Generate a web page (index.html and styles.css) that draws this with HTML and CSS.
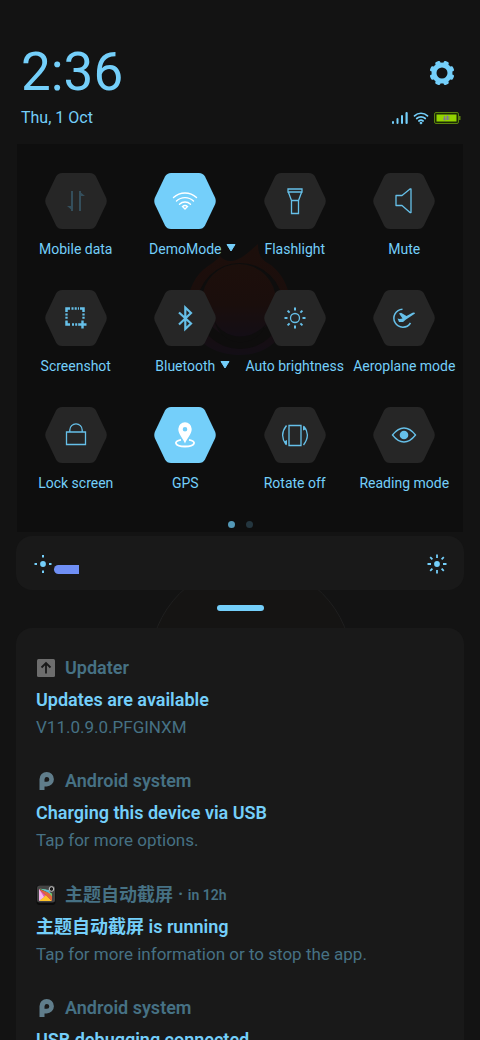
FILE: index.html
```html
<!DOCTYPE html>
<html lang="en">
<head>
<meta charset="utf-8">
<meta name="viewport" content="width=device-width, initial-scale=1">
<title>Notification shade</title>
<link rel="stylesheet" href="styles.css">
</head>
<body>
<main class="shade">
  <header class="header">
    <div class="header-row">
      <time class="clock">2:36</time>
      <button class="settings" aria-label="Settings">
        <svg viewBox="0 0 26 26" width="26" height="26"><circle cx="13" cy="13" r="8" fill="none" stroke="currentColor" stroke-width="5"/><g fill="currentColor"><rect id="tooth" x="10.300" y=".6" width="5.400" height="5" rx="1.500" transform="rotate(22.500 13 13)"/><use href="#tooth" transform="rotate(45 13 13)"/><use href="#tooth" transform="rotate(90 13 13)"/><use href="#tooth" transform="rotate(135 13 13)"/><use href="#tooth" transform="rotate(180 13 13)"/><use href="#tooth" transform="rotate(225 13 13)"/><use href="#tooth" transform="rotate(270 13 13)"/><use href="#tooth" transform="rotate(315 13 13)"/></g></svg>
      </button>
    </div>
    <div class="header-row">
      <span class="date">Thu, 1 Oct</span>
      <div class="status">
        <svg viewBox="0 0 16 14" width="16" height="14" fill="currentColor"><rect y="10" width="2" height="3" rx="1"/><rect x="4.500" y="7" width="2" height="6" rx="1"/><rect x="9" y="4" width="2" height="9" rx="1"/><rect x="13.500" y="1" width="2.200" height="12" rx="1"/></svg>
        <svg viewBox="0 0 16 14" width="16" height="14" fill="none" stroke="currentColor" stroke-width="1.700" stroke-linecap="round"><path d="M1.500 4.800a9.500 9.500 0 0 1 13 0M3.700 7.500a6.400 6.400 0 0 1 8.600 0M5.900 10a3.300 3.300 0 0 1 4.200 0"/><circle cx="8" cy="12" r=".5"/></svg>
        <svg viewBox="0 0 27 14" width="27" height="14"><rect x=".5" y="1.500" width="24" height="11" rx="1.500" fill="#1d2b05" stroke="#5b840d"/><rect x="2.500" y="3.500" width="20" height="7" fill="#94d500"/><rect x="25" y="5" width="1.500" height="4" fill="#5b840d"/><path d="M10.500 5v4.500M13.500 4.500v4.500M9 8h3.500M12 6h3.500M12.500 8h3" stroke="#80769a" stroke-width="1.200"/></svg>
      </div>
    </div>
  </header>

  <section class="panel" aria-label="Quick settings">
    <svg class="ember" viewBox="0 0 120 130" aria-hidden="true">
      <defs><linearGradient id="glow" x1="0" y1="0" x2="0" y2="1"><stop offset="0" stop-color="#23100b"/><stop offset=".55" stop-color="#200e0c"/><stop offset="1" stop-color="#160e1a"/></linearGradient></defs>
      <path d="M12 96C2 72 10 46 28 34c4-3 8-5 12-10 4 5 10 6 16 4 8-3 14-9 22-16 0 8 2 14 8 18 22 12 30 42 20 64-8 18-24 29-46 29S20 114 12 96z" fill="url(#glow)"/>
      <circle cx="60" cy="74" r="43" fill="#0e0d0d"/>
      <circle cx="59" cy="69" r="37" fill="url(#glow)"/>
      <path d="M34 88c8 18 34 24 52 4-8 24-44 26-52-4z" fill="#0e0d0d"/>
    </svg>
    <div class="tiles">
      <button class="tile off"><span class="hex"><svg class="shape" viewBox="0 0 62 56"><use href="#hex"/></svg><svg class="icon" viewBox="-16 -16 32 32"><path d="M-4-10V10M4 10V-10" stroke-width="2"/><path d="M-3 10l-6-5h5zM3-10l6 5H4z" fill="currentColor" stroke="none"/></svg></span><span class="label">Mobile data</span></button>
      <button class="tile on"><span class="hex"><svg class="shape" viewBox="0 0 62 56"><use href="#hex"/></svg><svg class="icon" viewBox="-16 -16 32 32" stroke-linecap="round"><path d="M-11.500-3.500a17 17 0 0 1 23 0M-8.500 0a12.500 12.500 0 0 1 17 0M-5.500 3.200a8 8 0 0 1 11 0" stroke-width="1.400"/><path d="M0 8l-2.500-2.500q2.500-2 5 0z" stroke-width="1.300"/></svg></span><span class="label">DemoMode<svg class="arrow" viewBox="0 0 10 8"><path d="M1 .5h8L5 7z"/></svg></span></button>
      <button class="tile"><span class="hex"><svg class="shape" viewBox="0 0 62 56"><use href="#hex"/></svg><svg class="icon" viewBox="-16 -16 32 32"><path d="M-7-12H7V-9H-7zM-6.500-8.500L-3.500-.5H3.500L6.500-8.500M-3.500-.5V12.500H3.500V-.5"/></svg></span><span class="label">Flashlight</span></button>
      <button class="tile"><span class="hex"><svg class="shape" viewBox="0 0 62 56"><use href="#hex"/></svg><svg class="icon" viewBox="-16 -16 32 32" stroke-linejoin="round"><path d="M-8-5.500h6L6-12h1V11.500H6L-2 4.500h-6z"/></svg></span><span class="label">Mute</span></button>

      <button class="tile"><span class="hex"><svg class="shape" viewBox="0 0 62 56"><use href="#hex"/></svg><svg class="icon" viewBox="-16 -16 32 32"><path d="M-9.500-6v-3.500H-6M4-9.500h3.500V-6M-9.500 3v3.500H-6" stroke-width="2.500"/><path d="M-4.500-9.500H3M-4 6.500H3" stroke-width="2.300" stroke-dasharray="2 1.200"/><path d="M-9.500-4.500V2.500M7.500-4.500V2" stroke-width="2.300" stroke-dasharray="2 1.200"/><path d="M6.500 2.500v8M2.500 6.500h8" stroke-width="2.400"/></svg></span><span class="label">Screenshot</span></button>
      <button class="tile"><span class="hex"><svg class="shape" viewBox="0 0 62 56"><use href="#hex"/></svg><svg class="icon" viewBox="-16 -16 32 32"><path d="M-6-5.500L6 5.500 .3 11V-10.500L6-5-6 6.500" stroke-width="2.200"/></svg></span><span class="label">Bluetooth<svg class="arrow" viewBox="0 0 10 8"><path d="M1 .5h8L5 7z"/></svg></span></button>
      <button class="tile"><span class="hex"><svg class="shape" viewBox="0 0 62 56"><use href="#hex"/></svg><svg class="icon" viewBox="-16 -16 32 32"><circle r="4.500"/><path d="M0-10.500v3M0 7.500v3M-10.500 0h3M7.500 0h3M-7.400-7.400l2 2M7.400-7.400l-2 2M-7.400 7.400l2-2M7.400 7.400l-2-2" stroke-width="2"/></svg></span><span class="label">Auto brightness</span></button>
      <button class="tile"><span class="hex"><svg class="shape" viewBox="0 0 62 56"><use href="#hex"/></svg><svg class="icon" viewBox="-16 -16 32 32"><path d="M-1.500-8.800A9 9 0 1 0 6.500 5" stroke-width="1.500"/><path d="M-6.500.5l2 .5 3-.5-3.500-5 2-.8L2.500-2l6-3.200q2.500-.8 2.500.8L2 1.500-1 4-5 4z" fill="currentColor" stroke="none"/></svg></span><span class="label">Aeroplane mode</span></button>

      <button class="tile"><span class="hex"><svg class="shape" viewBox="0 0 62 56"><use href="#hex"/></svg><svg class="icon" viewBox="-16 -16 32 32"><path d="M-9.500-3H9.500V9.500H-9.500zM-6.200-3v-2a6.200 6.200 0 0 1 12.400 0v2" stroke-width="1.300"/></svg></span><span class="label">Lock screen</span></button>
      <button class="tile on"><span class="hex"><svg class="shape" viewBox="0 0 62 56"><use href="#hex"/></svg><svg class="icon" viewBox="-16 -16 32 32"><path fill-rule="evenodd" d="M0 8.500C-2 3-6.700-.5-6.700-6a6.700 6.700 0 0 1 13.400 0C6.700-.5 2 3 0 8.500zM0-8a2.300 2.300 0 1 0 0 4.600A2.300 2.300 0 0 0 0-8z" fill="currentColor" stroke="none"/><path d="M-4 4.800C-12 6-10.500 11.500 0 11.500S12 6 4 4.800" stroke-width="1.800"/></svg></span><span class="label">GPS</span></button>
      <button class="tile"><span class="hex"><svg class="shape" viewBox="0 0 62 56"><use href="#hex"/></svg><svg class="icon" viewBox="-16 -16 32 32"><path d="M-6-9.500H6V10.500H-6z"/><path d="M-8.500-9.500Q-16 0-9 9.500M8.500 10Q16 0 9-8.500"/><path d="M-8 5v5.500l-3-4zM8-9.500v5l3.500-1.500z" fill="currentColor" stroke="none"/></svg></span><span class="label">Rotate off</span></button>
      <button class="tile"><span class="hex"><svg class="shape" viewBox="0 0 62 56"><use href="#hex"/></svg><svg class="icon" viewBox="-16 -16 32 32"><path d="M-11.500 0Q-6-7 0-7T11.500 0Q6 7 0 7T-11.500 0z"/><circle r="4.300" fill="currentColor" stroke="none"/></svg></span><span class="label">Reading mode</span></button>
    </div>
    <div class="dots"><span class="dot current"></span><span class="dot"></span></div>
  </section>

  <section class="brightness">
    <svg viewBox="-10 -10 20 20" width="20" height="20" stroke="currentColor" stroke-width="2"><circle r="2.900" fill="currentColor" stroke="none"/><path d="M0-9v2.500M0 6.500V9M-8.500 0H-6M6 0h2.500"/></svg>
    <input class="slider" type="range" min="0" max="100" value="7" aria-label="Brightness">
    <svg viewBox="-10 -10 20 20" width="20" height="20" stroke="currentColor" stroke-width="1.800"><circle r="2.900" fill="currentColor" stroke="none"/><path d="M0-9.500v3.500M0 6v3.500M-9.500 0H-6M6 0h3.500M-6.800-6.800l2.200 2.200M6.800-6.800L4.600-4.600M-6.800 6.800l2.200-2.200M6.800 6.800L4.600 4.600"/></svg>
  </section>

  <div class="grip">
    <svg class="arc" viewBox="0 0 204 38" aria-hidden="true"><circle cx="102" cy="75" r="101"/></svg>
    <span class="handle"></span>
  </div>

  <section class="notifications" aria-label="Notifications">
    <article class="note">
      <div class="app"><svg viewBox="0 0 20 20" width="20" height="20"><rect x="1" y="1" width="18" height="18" rx="1.500" fill="#6d6d6d"/><path d="M10 15.500V5.500M5.500 9.500L10 5l4.500 4.500" fill="none" stroke="#191919" stroke-width="1.800"/></svg><span>Updater</span></div>
      <h2 class="title">Updates are available</h2>
      <p class="text">V11.0.9.0.PFGINXM</p>
    </article>
    <article class="note">
      <div class="app"><svg viewBox="0 0 20 20" width="20" height="20"><use href="#pie"/></svg><span>Android system</span></div>
      <h2 class="title">Charging this device via USB</h2>
      <p class="text">Tap for more options.</p>
    </article>
    <article class="note">
      <div class="app"><svg viewBox="0 0 20 20" width="20" height="20"><rect x=".5" width="19" height="20" rx="3" fill="#0c0c0c"/><rect x="1" y=".5" width="18" height="17" rx="2.500" fill="#444"/><path d="M3 4v12l7-5.500z" fill="#e85ab0"/><path d="M3 16h13l-6-6z" fill="#ffc52b"/><path d="M3 4l7 6.500 6 5.500V9z" fill="#e4663d"/><path d="M3 3.500l7 1 6 7v-3z" fill="#72cb68"/><path d="M3 4l5 8-5 4z" fill="#f5b9ee"/><path d="M5 4l8 1 2 4z" fill="#60bed4"/><circle cx="15.500" cy="4" r="2.300" fill="#191919" stroke="#ccc"/></svg><span>主题自动截屏</span><span class="when">·&nbsp;<b>in 12h</b></span></div>
      <h2 class="title">主题自动截屏 is running</h2>
      <p class="text">Tap for more information or to stop the app.</p>
    </article>
    <article class="note">
      <div class="app"><svg viewBox="0 0 20 20" width="20" height="20"><use href="#pie"/></svg><span>Android system</span></div>
      <h2 class="title">USB debugging connected</h2>
    </article>
  </section>
</main>
<svg class="defs" aria-hidden="true"><defs>
  <path id="hex" d="M17 0H45Q49 0 51 3.500L61 24.500Q62.500 28 61 31.500L51 52.500Q49 56 45 56H17Q13 56 11 52.500L1 31.500Q-.5 28 1 24.500L11 3.500Q13 0 17 0z"/>
  <path id="pie" fill="#607d8b" fill-rule="evenodd" d="M3.500 19V8.200A7.200 7.200 0 1 1 10.700 15.400H8.500V19zM8.500 11.500V8.200a2.400 2.400 0 1 1 2.400 2.600H8.500z"/>
</defs></svg>
</body>
</html>
```
FILE: styles.css
```css
* { box-sizing: border-box; }

body {
  margin: 0;
  background: #131313;
  color: #74cffa;
  font-family: Roboto, "Noto Sans CJK SC", sans-serif;
}

button {
  padding: 0;
  border: 0;
  background: none;
  color: inherit;
  font: inherit;
}

svg { display: block; flex: none; }

.defs { position: absolute; width: 0; height: 0; }

.shade {
  height: 100vh;
  overflow: hidden;
  padding: 40px 16px 0;
}

.header { padding: 0 3px 0 5px; }

.header-row {
  display: flex;
  align-items: center;
  justify-content: space-between;
}

.clock { font-size: 53px; line-height: 64px; }

.settings { padding: 2px 6px 0 0; }

.date { font-size: 16px; line-height: 28px; }

.status { display: flex; align-items: center; gap: 5px; }

.panel {
  position: relative;
  margin: 12px 1px 0;
  padding: 29px 4px 4px;
  background: #0e0e0e;
}

.ember {
  position: absolute;
  top: 88px;
  left: 50%;
  width: 120px;
  margin-left: -60px;
  opacity: 0.7;
}

.tiles {
  position: relative;
  display: grid;
  grid-template-columns: repeat(4, minmax(0, 1fr));
  row-gap: 29px;
}

.tile {
  display: flex;
  flex-direction: column;
  align-items: center;
  gap: 8px;
}

.hex {
  display: grid;
  place-items: center;
  color: #66c0e9;
}

.shape, .icon { grid-area: 1 / 1; }

.shape { width: 62px; height: 56px; fill: #262626; }

.icon {
  width: 32px;
  height: 32px;
  fill: none;
  stroke: currentColor;
  stroke-width: 1.3;
}

.off .hex { color: #344e5b; }
.on .hex { color: #fff; }
.on .shape { fill: #74cffa; }

.label {
  position: relative;
  font-size: 14px;
  line-height: 24px;
  white-space: nowrap;
}

.arrow {
  position: absolute;
  top: 7px;
  left: 100%;
  width: 10px;
  margin-left: 5px;
  fill: #74cffa;
  stroke: #74cffa;
  stroke-linejoin: round;
}

.dots {
  display: flex;
  justify-content: center;
  gap: 11px;
  padding: 26px 0 0;
}

.dot {
  width: 7px;
  height: 7px;
  border-radius: 50%;
  background: #24363f;
}

.current { background: #5398b7; }

.brightness {
  display: flex;
  align-items: center;
  gap: 1px;
  margin-top: 4px;
  padding: 17px 17px 16px;
  border-radius: 16px;
  background: #191919;
}

.slider {
  flex: 1;
  min-width: 0;
  height: 9px;
  margin: 12px 12px 0 0;
  border-radius: 5px 0 0 5px;
  appearance: none;
  background: linear-gradient(to right, #6f8ff5 7%, transparent 7%);
}

.slider::-webkit-slider-thumb {
  appearance: none;
  width: 1px;
  height: 9px;
}

.grip {
  position: relative;
  display: flex;
  justify-content: center;
  padding: 15px 0 17px;
}

.arc {
  position: absolute;
  top: 0;
  left: 50%;
  width: 204px;
  margin-left: -91px;
  fill: #151413;
  stroke: #1f1f1f;
}

.handle {
  position: relative;
  width: 47px;
  height: 6px;
  border-radius: 3px;
  background: #74cffa;
}

.notifications {
  display: flex;
  flex-direction: column;
  gap: 30px;
  padding: 28px 20px;
  border-radius: 16px;
  background: #191919;
}

.app {
  display: flex;
  align-items: center;
  gap: 9px;
  color: #467184;
  font-size: 18px;
  font-weight: 600;
  line-height: 24px;
}

.when { margin-left: -4px; }
.when b { font-size: 14px; font-weight: 600; }

.title {
  margin: 8px 0 3px;
  font-size: 18px;
  font-weight: 600;
  line-height: 24px;
}

.text {
  margin: 0;
  color: #467184;
  font-size: 17px;
  line-height: 24px;
}
```
